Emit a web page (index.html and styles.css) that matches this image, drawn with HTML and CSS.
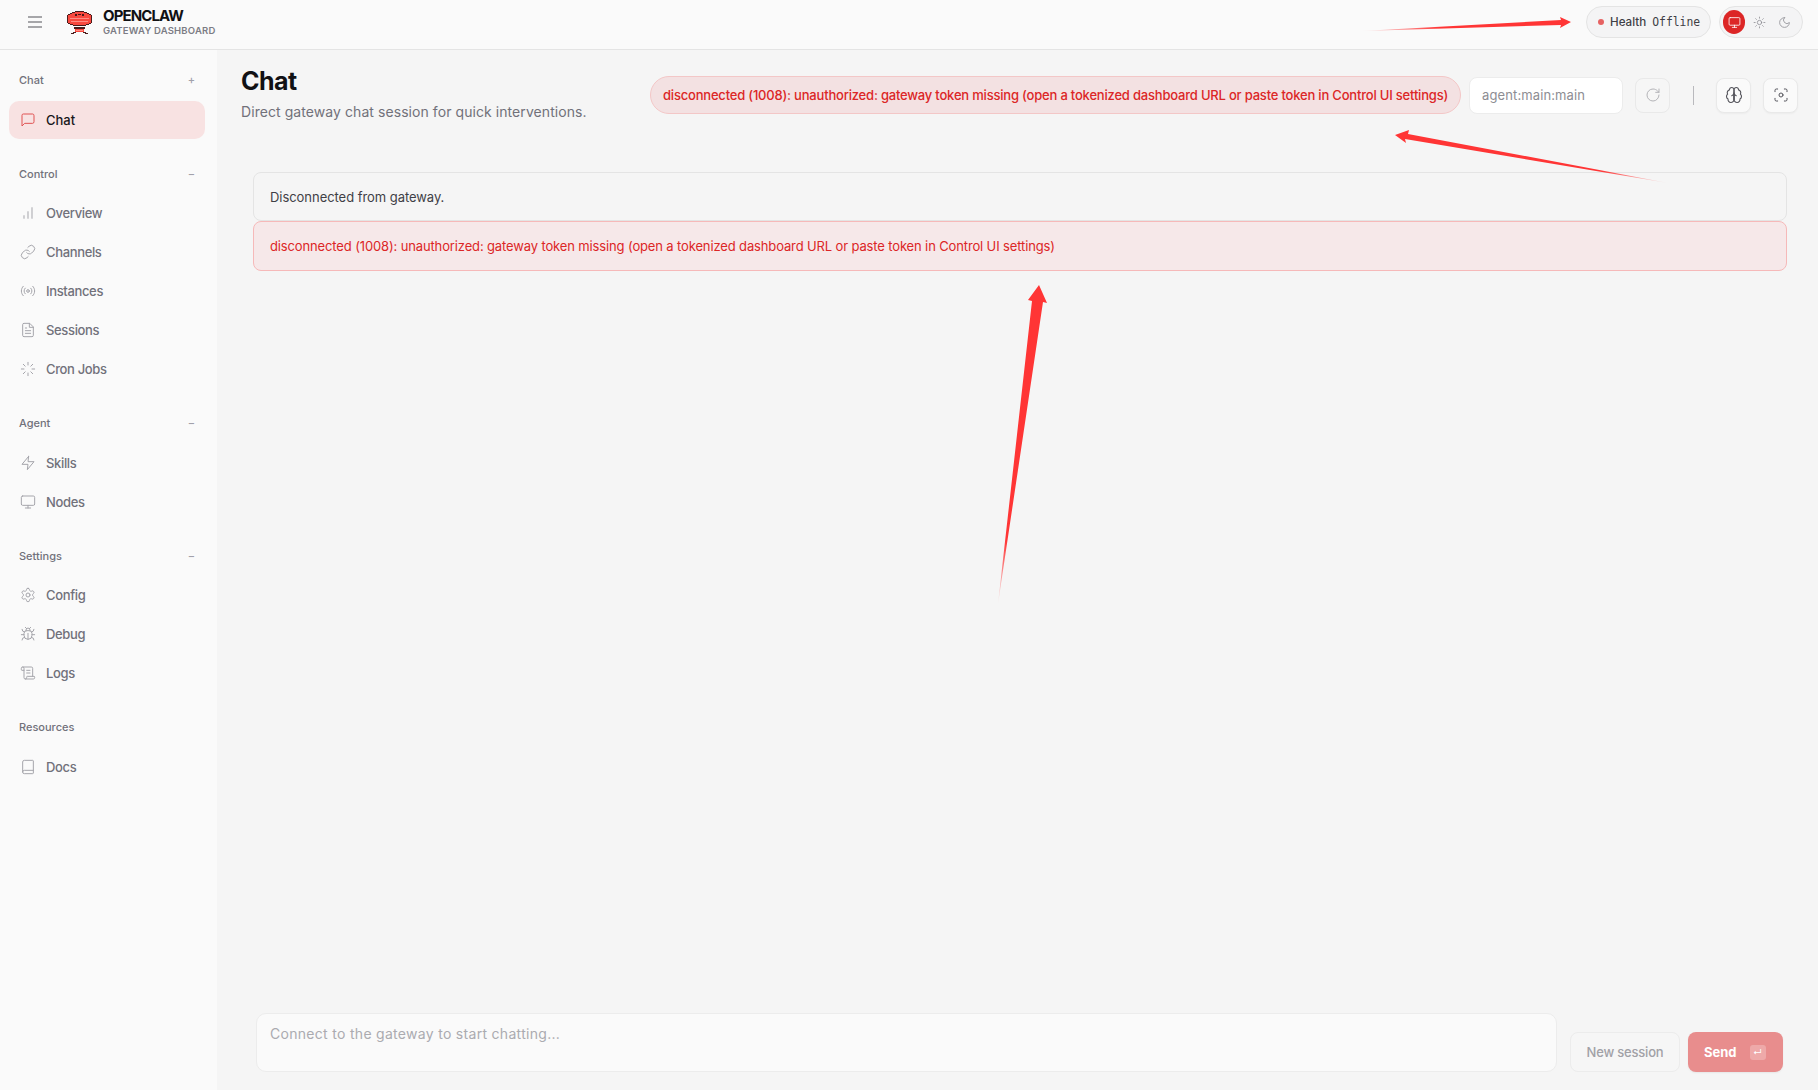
FILE: index.html
```html
<!DOCTYPE html>
<html lang="en">
<head>
<meta charset="utf-8">
<title>OpenClaw Gateway Dashboard</title>
<link rel="stylesheet" href="styles.css">
</head>
<body>
<svg class="defs" width="0" height="0" aria-hidden="true">
  <symbol id="i-msg" viewBox="0 0 24 24"><path d="M21 15a2 2 0 0 1-2 2H7l-4 4V5a2 2 0 0 1 2-2h14a2 2 0 0 1 2 2z"/></symbol>
  <symbol id="i-bars" viewBox="0 0 24 24"><path d="M6 20v-4M12 20V10M18 20V4"/></symbol>
  <symbol id="i-link" viewBox="0 0 24 24"><path d="M10 13a5 5 0 0 0 7.54.54l3-3a5 5 0 0 0-7.07-7.07l-1.72 1.71"/><path d="M14 11a5 5 0 0 0-7.54-.54l-3 3a5 5 0 0 0 7.07 7.07l1.71-1.71"/></symbol>
  <symbol id="i-radio" viewBox="0 0 24 24"><path d="M4.9 19.1C1 15.2 1 8.8 4.9 4.9"/><path d="M7.8 16.2c-2.3-2.3-2.3-6.1 0-8.5"/><circle cx="12" cy="12" r="2"/><path d="M16.2 7.8c2.3 2.3 2.3 6.1 0 8.5"/><path d="M19.1 4.9C23 8.8 23 15.1 19.1 19"/></symbol>
  <symbol id="i-file" viewBox="0 0 24 24"><path d="M14 2H6a2 2 0 0 0-2 2v16a2 2 0 0 0 2 2h12a2 2 0 0 0 2-2V8z"/><path d="M14 2v6h6M16 13H8M16 17H8M10 9H8"/></symbol>
  <symbol id="i-loader" viewBox="0 0 24 24"><path d="M12 2v4M12 18v4M4.93 4.93l2.83 2.83M16.24 16.24l2.83 2.83M2 12h4M18 12h4M4.93 19.07l2.83-2.83M16.24 7.76l2.83-2.83"/></symbol>
  <symbol id="i-zap" viewBox="0 0 24 24"><polygon points="13 2 3 14 12 14 11 22 21 10 12 10 13 2"/></symbol>
  <symbol id="i-monitor" viewBox="0 0 24 24"><rect x="2" y="3" width="20" height="14" rx="2"/><path d="M8 21h8M12 17v4"/></symbol>
  <symbol id="i-gear" viewBox="0 0 24 24"><path d="M12.22 2h-.44a2 2 0 0 0-2 2v.18a2 2 0 0 1-1 1.73l-.43.25a2 2 0 0 1-2 0l-.15-.08a2 2 0 0 0-2.73.73l-.22.38a2 2 0 0 0 .73 2.73l.15.1a2 2 0 0 1 1 1.72v.51a2 2 0 0 1-1 1.74l-.15.09a2 2 0 0 0-.73 2.73l.22.38a2 2 0 0 0 2.73.73l.15-.08a2 2 0 0 1 2 0l.43.25a2 2 0 0 1 1 1.73V20a2 2 0 0 0 2 2h.44a2 2 0 0 0 2-2v-.18a2 2 0 0 1 1-1.73l.43-.25a2 2 0 0 1 2 0l.15.08a2 2 0 0 0 2.73-.73l.22-.39a2 2 0 0 0-.73-2.73l-.15-.08a2 2 0 0 1-1-1.74v-.5a2 2 0 0 1 1-1.74l.15-.09a2 2 0 0 0 .73-2.73l-.22-.38a2 2 0 0 0-2.73-.73l-.15.08a2 2 0 0 1-2 0l-.43-.25a2 2 0 0 1-1-1.73V4a2 2 0 0 0-2-2z"/><circle cx="12" cy="12" r="3"/></symbol>
  <symbol id="i-bug" viewBox="0 0 24 24"><path d="M12 20v-9M14 7a4 4 0 0 1 4 4v3a6 6 0 0 1-12 0v-3a4 4 0 0 1 4-4zM14.12 3.88 16 2M21 21a4 4 0 0 0-3.81-4M21 5a4 4 0 0 1-3.55 3.97M22 13h-4M3 21a4 4 0 0 1 3.81-4M3 5a4 4 0 0 0 3.55 3.97M6 13H2M8 2l1.88 1.88M9 7.13v-1a3 3 0 1 1 6 0v1"/></symbol>
  <symbol id="i-scroll" viewBox="0 0 24 24"><path d="M15 12h-5M15 8h-5M19 17V5a2 2 0 0 0-2-2H4M8 21h12a2 2 0 0 0 2-2v-1a1 1 0 0 0-1-1H11a1 1 0 0 0-1 1v1a2 2 0 1 1-4 0V5a2 2 0 1 0-4 0v2a1 1 0 0 0 1 1h3"/></symbol>
  <symbol id="i-book" viewBox="0 0 24 24"><path d="M4 19.5v-15A2.5 2.5 0 0 1 6.5 2H19a1 1 0 0 1 1 1v18a1 1 0 0 1-1 1H6.5a2.5 2.5 0 0 1 0-5H20"/></symbol>
  <symbol id="i-sun" viewBox="0 0 24 24"><circle cx="12" cy="12" r="4"/><path d="M12 2v2M12 20v2M4.93 4.93l1.41 1.41M17.66 17.66l1.41 1.41M2 12h2M20 12h2M6.34 17.66l-1.41 1.41M19.07 4.93l-1.41 1.41"/></symbol>
  <symbol id="i-moon" viewBox="0 0 24 24"><path d="M12 3a6 6 0 0 0 9 9 9 9 0 1 1-9-9Z"/></symbol>
  <symbol id="i-refresh" viewBox="0 0 24 24"><path d="M21 12a9 9 0 1 1-9-9c2.52 0 4.93 1 6.74 2.74L21 8"/><path d="M21 3v5h-5"/></symbol>
  <symbol id="i-brain" viewBox="0 0 24 24"><path d="M12 5a3 3 0 1 0-5.997.125 4 4 0 0 0-2.526 5.77 4 4 0 0 0 .556 6.588A4 4 0 1 0 12 18Z"/><path d="M12 5a3 3 0 1 1 5.997.125 4 4 0 0 1 2.526 5.77 4 4 0 0 1-.556 6.588A4 4 0 1 1 12 18Z"/><path d="M15 13a4.5 4.5 0 0 1-3-4 4.5 4.5 0 0 1-3 4M12 18V9"/></symbol>
  <symbol id="i-scan" viewBox="0 0 24 24"><path d="M3 7V5a2 2 0 0 1 2-2h2M17 3h2a2 2 0 0 1 2 2v2M21 17v2a2 2 0 0 1-2 2h-2M7 21H5a2 2 0 0 1-2-2v-2"/><circle cx="12" cy="12" r="3"/></symbol>
</svg>

<header class="topbar">
  <button class="menu-btn" aria-label="Menu">
    <svg class="menu-icon" viewBox="0 0 14 12"><path d="M0 1h14M0 6h14M0 11h14"/></svg>
  </button>
  <svg class="logo" viewBox="0 0 27 24" shape-rendering="crispEdges" aria-hidden="true">
    <path class="lg-red" d="M9 1h9v1H9zM6 2h15v1H6zM4 3h19v1H4zM2 4h23v8H2zM4 12h19v1H4zM7 13h13v1H7zM9 18h9v3H9z"/>
    <path class="lg-dark" d="M9 0h9v1H9zM6 1h3v1H6zM18 1h3v1h-3zM4 2h2v1H4zM21 2h2v1h-2zM2 3h2v1H2zM23 3h2v1h-2zM1 4h1v8H1zM25 4h1v8h-1zM2 12h2v1H2zM23 12h2v1h-2zM4 13h3v1H4zM20 13h3v1h-3zM7 14h13v1H7zM8 16h11v2H8zM7 21h3v1H7zM17 21h3v1h-3zM5 22h3v1H5zM19 22h3v1h-3z"/>
    <path class="lg-dark" d="M9 3h2v2H9zM16 3h2v2h-2zM12 3h3v1h-3z"/>
    <path class="lg-light" d="M4 7h19v1H4zM5 10h17v1H5zM10 19h7v1h-7z"/>
  </svg>
  <div class="brand">
    <div class="brand-title">OPENCLAW</div>
    <div class="brand-sub">GATEWAY DASHBOARD</div>
  </div>
  <div class="top-right">
    <div class="health"><span class="health-dot"></span><span class="health-label">Health</span><span class="health-value">Offline</span></div>
    <div class="theme">
      <span class="theme-btn theme-active"><svg class="ic"><use href="#i-monitor"/></svg></span>
      <span class="theme-btn"><svg class="ic"><use href="#i-sun"/></svg></span>
      <span class="theme-btn"><svg class="ic"><use href="#i-moon"/></svg></span>
    </div>
  </div>
</header>

<div class="shell">
  <aside class="sidebar">
    <section class="group">
      <div class="group-head"><span>Chat</span><span class="toggle">+</span></div>
      <a class="item active"><svg class="ic"><use href="#i-msg"/></svg>Chat</a>
    </section>
    <section class="group">
      <div class="group-head"><span>Control</span><span class="toggle">−</span></div>
      <a class="item"><svg class="ic"><use href="#i-bars"/></svg>Overview</a>
      <a class="item"><svg class="ic"><use href="#i-link"/></svg>Channels</a>
      <a class="item"><svg class="ic"><use href="#i-radio"/></svg>Instances</a>
      <a class="item"><svg class="ic"><use href="#i-file"/></svg>Sessions</a>
      <a class="item"><svg class="ic"><use href="#i-loader"/></svg>Cron Jobs</a>
    </section>
    <section class="group">
      <div class="group-head"><span>Agent</span><span class="toggle">−</span></div>
      <a class="item"><svg class="ic"><use href="#i-zap"/></svg>Skills</a>
      <a class="item"><svg class="ic"><use href="#i-monitor"/></svg>Nodes</a>
    </section>
    <section class="group">
      <div class="group-head"><span>Settings</span><span class="toggle">−</span></div>
      <a class="item"><svg class="ic"><use href="#i-gear"/></svg>Config</a>
      <a class="item"><svg class="ic"><use href="#i-bug"/></svg>Debug</a>
      <a class="item"><svg class="ic"><use href="#i-scroll"/></svg>Logs</a>
    </section>
    <section class="group">
      <div class="group-head"><span>Resources</span></div>
      <a class="item"><svg class="ic"><use href="#i-book"/></svg>Docs</a>
    </section>
  </aside>

  <main class="main">
    <div class="page-head">
      <div class="page-titles">
        <h1 class="page-title">Chat</h1>
        <p class="page-sub">Direct gateway chat session for quick interventions.</p>
      </div>
      <div class="page-tools">
        <div class="error-pill">disconnected (1008): unauthorized: gateway token missing (open a tokenized dashboard URL or paste token in Control UI settings)</div>
        <div class="session-input">agent:main:main</div>
        <span class="tool-btn tool-disabled"><svg class="ic"><use href="#i-refresh"/></svg></span>
        <span class="tool-sep"></span>
        <span class="tool-btn"><svg class="ic ic-lg"><use href="#i-brain"/></svg></span>
        <span class="tool-btn"><svg class="ic"><use href="#i-scan"/></svg></span>
      </div>
    </div>

    <div class="thread">
      <div class="callout">Disconnected from gateway.</div>
      <div class="callout callout-danger">disconnected (1008): unauthorized: gateway token missing (open a tokenized dashboard URL or paste token in Control UI settings)</div>
    </div>

    <div class="compose">
      <div class="compose-box">Connect to the gateway to start chatting...</div>
      <span class="btn-secondary">New session</span>
      <span class="btn-send">Send<span class="kbd">↵</span></span>
    </div>
  </main>
</div>

<svg class="annotations" viewBox="0 0 1818 1090" aria-hidden="true">
  <defs>
    <linearGradient id="fade1" gradientUnits="userSpaceOnUse" x1="1362" y1="31" x2="1440" y2="28"><stop offset="0" stop-color="#ff3535" stop-opacity=".05"/><stop offset="1" stop-color="#ff3535"/></linearGradient>
    <linearGradient id="fade2" gradientUnits="userSpaceOnUse" x1="1668" y1="183" x2="1600" y2="170"><stop offset="0" stop-color="#ff3535" stop-opacity=".05"/><stop offset="1" stop-color="#ff3535"/></linearGradient>
    <linearGradient id="fade3" gradientUnits="userSpaceOnUse" x1="998" y1="604" x2="1006" y2="540"><stop offset="0" stop-color="#ff3535" stop-opacity=".05"/><stop offset="1" stop-color="#ff3535"/></linearGradient>
  </defs>
  <polygon fill="url(#fade1)" points="1362,31 1561,20 1560,17 1571,22 1560,28 1561,25"/>
  <polygon fill="url(#fade2)" points="1668,183 1405,139 1406,143 1395,135 1409,130 1408,134"/>
  <polygon fill="url(#fade3)" points="998,604 1032,301 1028,300 1039,285 1047,303 1043,302"/>
</svg>
</body>
</html>
```

FILE: styles.css
```css
* { box-sizing: border-box; }
html, body { margin: 0; height: 100%; }
body {
  position: relative;
  width: 1818px;
  height: 1090px;
  overflow: hidden;
  background: #f5f5f5;
  color: #3f3f46;
  font-family: Inter, "Liberation Sans", sans-serif;
  font-size: 14px;
}
.defs { position: absolute; }
.ic {
  width: 16px;
  height: 16px;
  flex: none;
  fill: none;
  stroke: currentColor;
  stroke-width: 1.5;
  stroke-linecap: round;
  stroke-linejoin: round;
}
.ic-lg { width: 18px; height: 18px; }

/* top bar */
.topbar {
  height: 50px;
  display: flex;
  align-items: center;
  padding: 0 15px 5px 28px;
  background: #fafafa;
  border-bottom: 1px solid #e4e4e4;
}
.menu-btn { width: 15px; height: 16px; padding: 0; border: 0; background: none; display: flex; align-items: center; }
.menu-icon { width: 14px; height: 12px; fill: none; stroke: #8b8b8f; stroke-width: 1.6; }
.logo { width: 27px; height: 24px; margin-left: 23px; margin-top: 1px; }
.lg-dark { fill: #4a1c1c; }
.lg-red { fill: #f9493f; }
.lg-light { fill: #ff8d85; }
.brand { margin-left: 10px; display: flex; flex-direction: column; }
.brand-title { font-size: 15px; line-height: 16px; font-weight: 700; letter-spacing: -0.9px; color: #111114; }
.brand-sub { font-size: 9.5px; line-height: 13px; font-weight: 600; letter-spacing: 0.2px; color: #7c7c84; }
.top-right { margin-left: auto; display: flex; align-items: center; gap: 8px; }
.health {
  height: 32px;
  width: 125px;
  display: flex;
  align-items: center;
  padding-left: 11px;
  border: 1px solid #e4e4e4;
  border-radius: 16px;
  background: #f4f4f5;
  font-size: 11.6px;
}
.health-dot { width: 6px; height: 6px; border-radius: 50%; background: #e66262; margin-right: 1px; }
.health-label { font-weight: 500; color: #3f3f46; margin-left: 5px; }
.health-value { font-family: "DejaVu Sans Mono", monospace; font-size: 11.4px; color: #3f3f46; margin-left: 6px; }
.theme {
  height: 32px;
  width: 84px;
  display: flex;
  align-items: center;
  padding: 0 3px;
  border: 1px solid #e4e4e4;
  border-radius: 16px;
  background: #f4f4f5;
  color: #8f8f95;
}
.theme-btn { width: 24px; height: 24px; margin-right: 3px; display: flex; align-items: center; justify-content: center; border-radius: 50%; }
.theme-btn .ic { width: 13px; height: 13px; }
.theme-active { background: #dc2626; color: #fff; }

/* shell */
.shell { display: flex; height: 1040px; }
.sidebar {
  width: 217px;
  flex: none;
  padding: 20px 12px 0 9px;
  background: #fafafa;
}
.group { display: flex; flex-direction: column; gap: 1px; margin-bottom: 24.75px; }
.group-head {
  height: 20px;
  margin-bottom: 9.75px;
  padding: 0 10px;
  display: flex;
  align-items: center;
  justify-content: space-between;
  font-size: 11px;
  font-weight: 500;
  color: #71717a;
}
.toggle { color: #a1a1aa; font-size: 11px; padding-right: 0; }
.item {
  height: 38px;
  display: flex;
  align-items: center;
  gap: 10px;
  padding-left: 11px;
  border-radius: 10px;
  font-size: 13px;
  font-weight: 500;
  letter-spacing: -0.35px;
  color: #71717a;
}
.item .ic { color: #a5a5ab; }
.active { background: #f8e2e2; color: #18181b; letter-spacing: 0; }
.active .ic { color: #e05252; }

/* main */
.main { flex: 1; min-width: 0; display: flex; flex-direction: column; padding: 0 20px 0 24px; }
.page-head { display: flex; justify-content: space-between; align-items: flex-start; height: 122px; padding-top: 15px; }
.page-title { margin: 0; font-size: 25px; line-height: 32px; font-weight: 700; letter-spacing: -0.5px; color: #111114; }
.page-sub { margin: 6px 0 0; font-size: 14px; line-height: 18px; letter-spacing: 0.07px; color: #71717a; }
.page-tools { display: flex; align-items: center; height: 38px; margin-top: 11px; }
.error-pill {
  height: 38px;
  width: 811px;
  display: flex;
  align-items: center;
  padding: 0 12px;
  white-space: nowrap;
  border: 1px solid #f3c7c7;
  border-radius: 19px;
  background: #f3e1e2;
  color: #dc2626;
  font-size: 13px;
  font-weight: 500;
  letter-spacing: -0.197px;
}
.session-input {
  width: 154px;
  height: 37px;
  margin-left: 8px;
  display: flex;
  align-items: center;
  padding-left: 12px;
  border: 1px solid #ececec;
  border-radius: 8px;
  background: #fff;
  color: #8d8d93;
  font-size: 13px;
  letter-spacing: 0.12px;
}
.tool-btn {
  width: 35px;
  height: 35px;
  display: flex;
  align-items: center;
  justify-content: center;
  margin-left: 12px;
  border: 1px solid #e9e9e9;
  border-radius: 8px;
  background: #fafafa;
  color: #55555c;
  box-shadow: 0 1px 2px rgba(0,0,0,.04);
}
.tool-disabled { margin-left: 12px; color: #b4b4b8; background: #f6f6f6; box-shadow: none; }
.tool-sep { width: 1px; height: 19px; margin: 0 0 0 23px; background: #b9b9bd; }
.tool-sep + .tool-btn { margin-left: 22px; }

.thread { flex: 1; min-height: 0; margin: 0 11px 0 12px; display: flex; flex-direction: column; }
.callout {
  height: 49px;
  display: flex;
  align-items: center;
  padding: 0 16px;
  border: 1px solid #e4e4e4;
  border-radius: 8px;
  font-size: 13px;
  letter-spacing: -0.05px;
  color: #3f3f46;
}
.callout-danger {
  height: 50px;
  border-color: #f6b9b9;
  background: #f6e8e9;
  color: #dc2626;
  letter-spacing: -0.135px;
}

.compose { display: flex; align-items: flex-end; gap: 8px; padding: 0 15px 18px 15px; }
.compose-box {
  flex: 1;
  height: 59px;
  margin-right: 5px;
  padding: 10px 13px;
  border: 1px solid #ececec;
  border-radius: 10px;
  background: #fafafa;
  color: #ababb0;
  font-size: 14px;
  line-height: 20px;
  letter-spacing: 0.3px;
}
.btn-secondary {
  width: 110px;
  height: 40px;
  display: flex;
  align-items: center;
  justify-content: center;
  border: 1px solid #ececec;
  border-radius: 8px;
  background: #f6f6f6;
  color: #a1a1a6;
  font-size: 13px;
  font-weight: 500;
  letter-spacing: -0.2px;
}
.btn-send {
  width: 95px;
  height: 40px;
  display: flex;
  align-items: center;
  padding-left: 16px;
  border-radius: 8px;
  background: #e88d8d;
  color: #fff;
  font-size: 13px;
  font-weight: 700;
  box-shadow: 0 1px 2px rgba(0,0,0,.06);
}
.kbd {
  width: 16px;
  height: 15px;
  margin-left: 13px;
  display: flex;
  align-items: center;
  justify-content: center;
  border-radius: 3px;
  background: rgba(255,255,255,.25);
  font-size: 9px;
  font-weight: 400;
}
.annotations { position: absolute; left: 0; top: 0; width: 1818px; height: 1090px; pointer-events: none; }
```
